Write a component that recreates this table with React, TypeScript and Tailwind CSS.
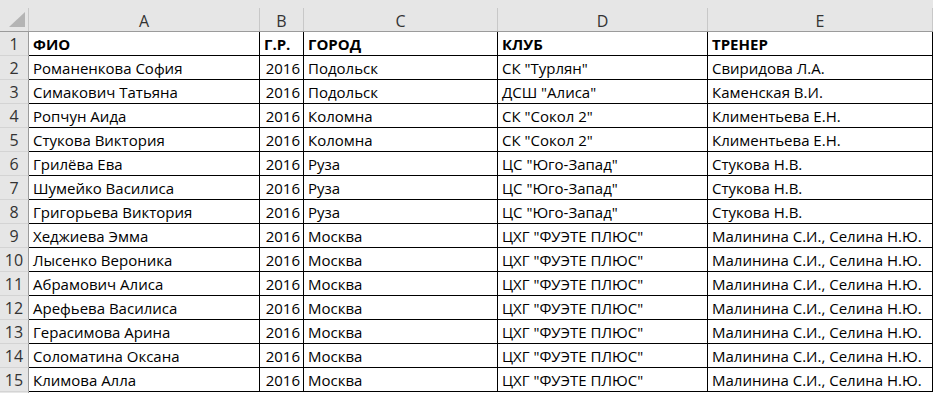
import React from "react";

const rows: string[][] = [
  ["ФИО", "Г.Р.", "ГОРОД", "КЛУБ", "ТРЕНЕР"],
  ["Романенкова София", "2016", "Подольск", 'СК "Турлян"', "Свиридова Л.А."],
  ["Симакович Татьяна", "2016", "Подольск", 'ДСШ "Алиса"', "Каменская В.И."],
  ["Ропчун Аида", "2016", "Коломна", 'СК "Сокол 2"', "Климентьева Е.Н."],
  ["Стукова Виктория", "2016", "Коломна", 'СК "Сокол 2"', "Климентьева Е.Н."],
  ["Грилёва Ева", "2016", "Руза", 'ЦС "Юго-Запад"', "Стукова Н.В."],
  ["Шумейко Василиса", "2016", "Руза", 'ЦС "Юго-Запад"', "Стукова Н.В."],
  ["Григорьева Виктория", "2016", "Руза", 'ЦС "Юго-Запад"', "Стукова Н.В."],
  ["Хеджиева Эмма", "2016", "Москва", 'ЦХГ "ФУЭТЕ ПЛЮС"', "Малинина С.И., Селина Н.Ю."],
  ["Лысенко Вероника", "2016", "Москва", 'ЦХГ "ФУЭТЕ ПЛЮС"', "Малинина С.И., Селина Н.Ю."],
  ["Абрамович Алиса", "2016", "Москва", 'ЦХГ "ФУЭТЕ ПЛЮС"', "Малинина С.И., Селина Н.Ю."],
  ["Арефьева Василиса", "2016", "Москва", 'ЦХГ "ФУЭТЕ ПЛЮС"', "Малинина С.И., Селина Н.Ю."],
  ["Герасимова Арина", "2016", "Москва", 'ЦХГ "ФУЭТЕ ПЛЮС"', "Малинина С.И., Селина Н.Ю."],
  ["Соломатина Оксана", "2016", "Москва", 'ЦХГ "ФУЭТЕ ПЛЮС"', "Малинина С.И., Селина Н.Ю."],
  ["Климова Алла", "2016", "Москва", 'ЦХГ "ФУЭТЕ ПЛЮС"', "Малинина С.И., Селина Н.Ю."],
];

const colW = ["w-[231px]", "w-[44px]", "w-[194px]", "w-[210px]", "w-[225px]"];
const letters = ["A", "B", "C", "D", "E"];

export default function App() {
  return (
    <div
      className="w-[933px] h-[393px] overflow-hidden bg-white text-[15px] leading-none text-black"
      style={{ fontFamily: '"Open Sans", "Noto Sans", sans-serif' }}
    >
      <div className="h-[8px] bg-[#e6e6e6]" />
      <div className="flex h-[24px] bg-[#e6e6e6] border-b border-[#9b9b9b]">
        <div className="w-[29px] shrink-0 border-r border-[#c8c8c8] relative">
          <svg className="absolute left-[8px] top-[4px]" width="18" height="16" viewBox="0 0 18 16">
            <polygon points="17,0 17,15 1,15" fill="#b4b4b4" />
          </svg>
        </div>
        {letters.map((l, i) => (
          <div
            key={l}
            className={`${colW[i]} shrink-0 border-r border-[#c8c8c8] flex items-center justify-center text-[16px] text-[#333] pt-[2px]`}
          >
            {l}
          </div>
        ))}
      </div>
      {rows.map((r, ri) => (
        <div key={ri} className="flex h-[24px]">
          <div className="w-[29px] shrink-0 bg-[#e6e6e6] border-r border-[#9b9b9b] border-b border-b-[#d4d4d4] flex items-center justify-center text-[16px] text-[#333] pt-[1px]">
            {ri + 1}
          </div>
          {r.map((c, ci) => (
            <div
              key={ci}
              className={`${colW[ci]} shrink-0 border-r border-b border-black flex items-center whitespace-nowrap overflow-hidden pt-[1px] ${
                ci === 1 && ri > 0 ? "justify-end pr-[3px]" : "pl-[4px]"
              } ${ri === 0 ? "font-bold" : ""}`}
            >
              {c}
            </div>
          ))}
        </div>
      ))}
      <div className="flex h-[8px]">
        <div className="w-[29px] shrink-0 bg-[#e6e6e6] border-r border-[#9b9b9b]" />
      </div>
    </div>
  );
}
